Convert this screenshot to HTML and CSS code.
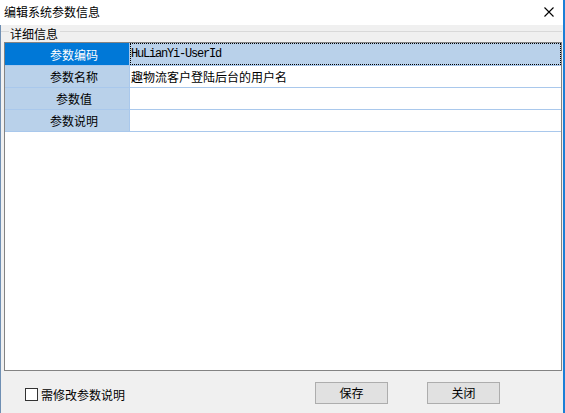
FILE: index.html
```html
<!DOCTYPE html>
<html lang="zh-CN">

<head>
  <meta charset="UTF-8">
  <title>编辑系统参数信息</title>
  <link rel="stylesheet" href="styles.css">
</head>

<body>
  <div class="window">
    <header class="titlebar">
      <span class="title">编辑系统参数信息</span>
      <svg class="close" width="10" height="10" viewBox="0 0 10 10">
        <path d="M0.5 0.5 L9.5 9.5 M9.5 0.5 L0.5 9.5" stroke="#000" stroke-width="1.1" fill="none" />
      </svg>
    </header>

    <main class="content">
      <div class="group-head"><span class="group-label">详细信息</span></div>

      <div class="grid">
        <div class="row">
          <div class="key selected">参数编码</div>
          <div class="val focused mono">HuLianYi-UserId</div>
        </div>
        <div class="row">
          <div class="key">参数名称</div>
          <div class="val">趣物流客户登陆后台的用户名</div>
        </div>
        <div class="row">
          <div class="key">参数值</div>
          <div class="val"></div>
        </div>
        <div class="row">
          <div class="key">参数说明</div>
          <div class="val"></div>
        </div>
      </div>

      <footer class="bottom">
        <label class="check"><span class="box"></span>需修改参数说明</label>
        <div class="actions">
          <button class="btn">保存</button>
          <button class="btn">关闭</button>
        </div>
      </footer>
    </main>
  </div>
</body>

</html>
```

FILE: styles.css
```css
html,
body {
  margin: 0;
  width: 565px;
  height: 413px;
  overflow: hidden;
}

body {
  background: #f0f0f0;
  font-family: "Noto Sans CJK SC", "Noto Sans", sans-serif;
  font-size: 12px;
  color: #000;
}

.window {
  display: flex;
  flex-direction: column;
  width: 563px;
  height: 413px;
  border-right: 2px solid #1b7fd6;
}

.titlebar {
  height: 25px;
  flex: none;
  background: #fff;
  display: flex;
  align-items: center;
  justify-content: space-between;
  padding-inline: 4px 9px;
}

.title {
  line-height: 14px;
  margin-top: -1px;
}

.close {
  display: block;
  margin-top: -1px;
}

.content {
  flex: 1;
  display: flex;
  flex-direction: column;
  border-left: 1px solid #6f8fb3;
}

.group-head {
  height: 17px;
  flex: none;
  background: linear-gradient(to bottom, transparent 6px, #d9d9d9 6px, #d9d9d9 7px, transparent 7px);
  margin-right: 1px;
}

.group-label {
  display: inline-block;
  margin-left: 8px;
  padding-inline: 1px 2px;
  background: #f0f0f0;
  line-height: 13px;
}

.grid {
  flex: none;
  margin-left: 3px;
  width: 556px;
  height: 327px;
  border: 1px solid #838383;
  background: #fff;
}

.row {
  display: flex;
  height: 21px;
  border-bottom: 1px solid #a9c8ec;
}

.row:first-child {
  height: 22px;
}

.key {
  width: 110px;
  flex: none;
  background: #b9d1ea;
  border-right: 1px solid #a9c8ec;
  display: flex;
  align-items: center;
  justify-content: center;
  padding-left: 14px;
}

.key.selected {
  background: #0078d7;
  color: #fff;
}

.val {
  flex: 1;
  display: flex;
  align-items: center;
  padding-left: 1px;
}

.val.focused {
  background: #b9d1ea;
  outline: 1px dotted #000;
  outline-offset: -1px;
}

.mono {
  font-family: "Liberation Mono", "DejaVu Sans Mono", monospace;
  font-size: 12px;
  letter-spacing: -1.2px;
  padding-left: 1px;
}

.bottom {
  flex: 1;
  display: flex;
  align-items: center;
}

.check {
  display: flex;
  align-items: center;
  margin-left: 24px;
  margin-top: 4px;
}

.box {
  width: 11px;
  height: 11px;
  border: 1px solid #333;
  background: #fff;
  margin-right: 3px;
}

.actions {
  margin-left: auto;
  margin-right: 63px;
  display: flex;
  gap: 39px;
  margin-top: 1px;
}

.btn {
  width: 73px;
  height: 22px;
  background: #e1e1e1;
  border: 1px solid #adadad;
  font-family: inherit;
  font-size: 12px;
  padding: 0;
  color: #000;
}
```
